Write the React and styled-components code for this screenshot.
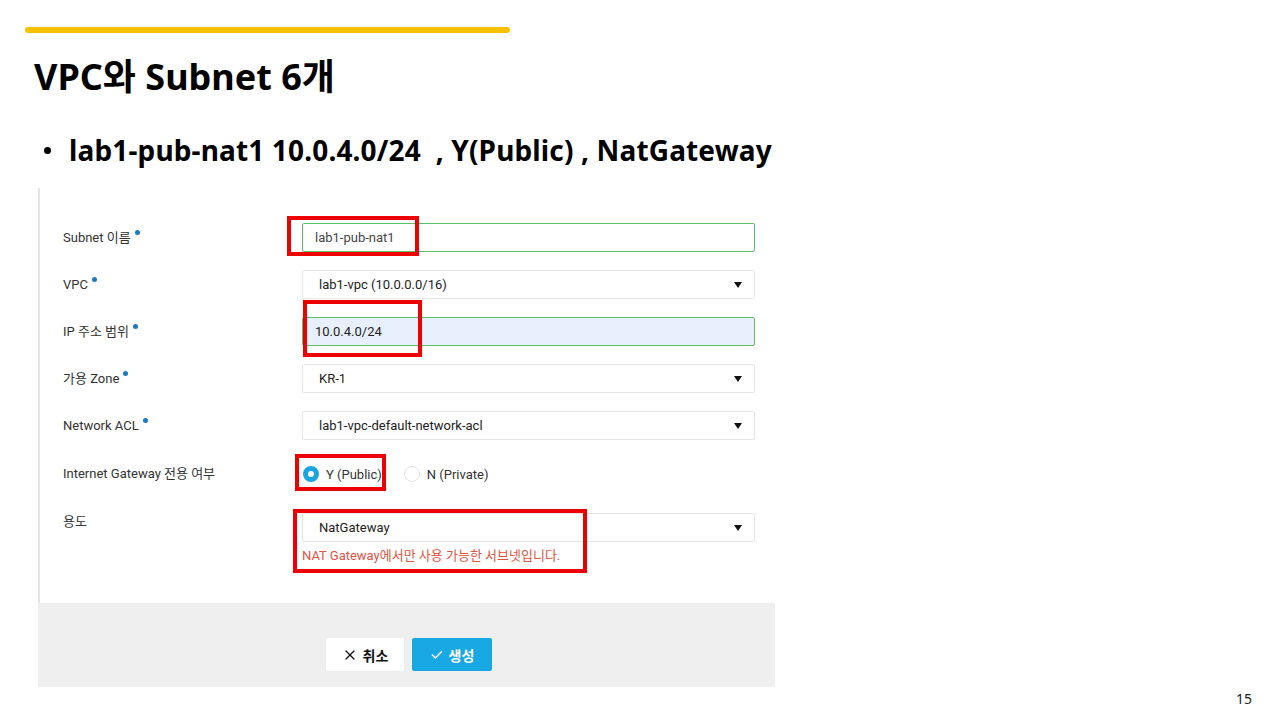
import React from 'react';
import styled, { createGlobalStyle } from 'styled-components';
import { X, Check } from 'lucide-react';

const GlobalStyle = createGlobalStyle`
  html, body {
    margin: 0;
    padding: 0;
    background: #ffffff;
  }
  * {
    box-sizing: border-box;
  }
`;

const Slide = styled.div`
  position: relative;
  width: 1280px;
  height: 720px;
  overflow: hidden;
  background: #ffffff;
  display: flex;
  flex-direction: column;
  font-family: "Noto Sans", "Noto Sans CJK KR", sans-serif;
`;

const TopRule = styled.div`
  margin: 27px 0 0 25px;
  width: 485px;
  height: 6px;
  border-radius: 3px;
  background: #f6c200;
`;

const Title = styled.h1`
  margin: 22px 0 0 34px;
  font-family: "Noto Sans", "Noto Sans CJK KR", sans-serif;
  font-size: 36px;
  font-weight: 700;
  line-height: 44px;
  color: #000000;
`;

const Bullet = styled.div`
  margin: 33px 0 0 44px;
  display: flex;
  align-items: center;
  gap: 18px;
  font-size: 28px;
  font-weight: 700;
  line-height: 36px;
  letter-spacing: 0.15px;
  color: #000000;
  white-space: pre;

  &::before {
    content: '';
    width: 7px;
    height: 7px;
    border-radius: 50%;
    background: #000000;
  }
`;

const Panel = styled.div`
  margin: 20px 0 0 38px;
  width: 737px;
  display: flex;
  flex-direction: column;
  font-family: Roboto, "Noto Sans CJK KR", sans-serif;
  font-size: 13px;
  color: #333333;
`;

const FormArea = styled.div`
  height: 415px;
  border-left: 2px solid #e4e4e4;
  padding: 35px 20px 0 23px;
  display: flex;
  flex-direction: column;
  gap: 18px;
`;

const Row = styled.div`
  display: grid;
  grid-template-columns: 239px 453px;
  align-items: start;
  margin-bottom: ${(p) => (p.$extra ? `${p.$extra}px` : '0')};
`;

const Label = styled.div`
  line-height: ${(p) => p.$lh || 29}px;
  white-space: nowrap;
`;

const Required = styled.span`
  display: inline-block;
  width: 5px;
  height: 5px;
  margin-left: 4px;
  border-radius: 50%;
  background: #1a78c8;
  vertical-align: 7px;
`;

const Field = styled.div`
  position: relative;
`;

const TextInput = styled.div`
  height: 29px;
  border: 1px solid #5cbd6a;
  border-radius: 2px;
  background: ${(p) => (p.$filled ? '#e8f0fd' : '#ffffff')};
  padding-left: 12px;
  line-height: 27px;
  color: ${(p) => (p.$filled ? '#222222' : '#444444')};
`;

const Select = styled.div`
  height: 29px;
  border: 1px solid #e6e6e6;
  border-radius: 2px;
  background: #ffffff;
  padding: 0 12px 0 16px;
  display: flex;
  align-items: center;
  justify-content: space-between;
  color: #222222;
`;

const Caret = styled.span`
  width: 0;
  height: 0;
  border-left: 4.5px solid transparent;
  border-right: 4.5px solid transparent;
  border-top: 6px solid #111111;
`;

const RadioGroup = styled.div`
  height: 32px;
  display: flex;
  align-items: center;
  padding-left: 1px;
  gap: 22px;
`;

const RadioOption = styled.label`
  display: flex;
  align-items: center;
  gap: 7px;
  color: #333333;
`;

const RadioDot = styled.span`
  width: 16px;
  height: 16px;
  border-radius: 50%;
  border: ${(p) => (p.$on ? '5px solid #1ba5e0' : '1px solid #e2e2e2')};
  background: #ffffff;
`;

const Hint = styled.div`
  margin-top: 5px;
  color: #e0533f;
  font-size: 13px;
  line-height: 17px;
`;

const Highlight = styled.div`
  position: absolute;
  left: ${(p) => p.$x}px;
  top: ${(p) => p.$y}px;
  width: ${(p) => p.$w}px;
  height: ${(p) => p.$h}px;
  border: 4px solid #ee0000;
  pointer-events: none;
`;

const Footer = styled.div`
  height: 84px;
  background: #efefef;
  display: flex;
  justify-content: center;
  align-items: flex-start;
  padding: 35px 0 0 5px;
  gap: 8px;
`;

const Button = styled.button`
  height: 33px;
  width: ${(p) => (p.$primary ? '80px' : '78px')};
  border: none;
  border-radius: 2px;
  background: ${(p) => (p.$primary ? '#18a9e4' : '#ffffff')};
  color: ${(p) => (p.$primary ? '#ffffff' : '#111111')};
  font-family: "Noto Sans CJK KR", sans-serif;
  font-size: 14px;
  font-weight: 700;
  display: flex;
  align-items: center;
  justify-content: center;
  gap: 5px;
  padding: 0;
`;

const PageNumber = styled.div`
  position: absolute;
  right: 28px;
  bottom: 12px;
  font-family: "Noto Sans", sans-serif;
  font-size: 14px;
  color: #222222;
`;

export default function App() {
  return (
    <Slide>
      <GlobalStyle />
      <TopRule />
      <Title>VPC와 Subnet 6개</Title>
      <Bullet>lab1-pub-nat1 10.0.4.0/24  , Y(Public) , NatGateway</Bullet>

      <Panel>
        <FormArea>
          <Row>
            <Label>Subnet 이름<Required /></Label>
            <Field>
              <TextInput>lab1-pub-nat1</TextInput>
              <Highlight $x={-15} $y={-7} $w={132} $h={40} />
            </Field>
          </Row>

          <Row>
            <Label>VPC<Required /></Label>
            <Select>lab1-vpc (10.0.0.0/16)<Caret /></Select>
          </Row>

          <Row>
            <Label>IP 주소 범위<Required /></Label>
            <Field>
              <TextInput $filled>10.0.4.0/24</TextInput>
              <Highlight $x={1} $y={-17} $w={119} $h={57} />
            </Field>
          </Row>

          <Row>
            <Label>가용 Zone<Required /></Label>
            <Select>KR-1<Caret /></Select>
          </Row>

          <Row>
            <Label>Network ACL<Required /></Label>
            <Select>lab1-vpc-default-network-acl<Caret /></Select>
          </Row>

          <Row $extra={5}>
            <Label $lh={32}>Internet Gateway 전용 여부</Label>
            <Field>
              <RadioGroup>
                <RadioOption><RadioDot $on />Y (Public)</RadioOption>
                <RadioOption><RadioDot />N (Private)</RadioOption>
              </RadioGroup>
              <Highlight $x={-7} $y={-4} $w={91} $h={37} />
            </Field>
          </Row>

          <Row>
            <Label $lh={17}>용도</Label>
            <Field>
              <Select>NatGateway<Caret /></Select>
              <Hint>NAT Gateway에서만 사용 가능한 서브넷입니다.</Hint>
              <Highlight $x={-9} $y={-4} $w={294} $h={64} />
            </Field>
          </Row>
        </FormArea>

        <Footer>
          <Button>
            <X size={16} strokeWidth={1.8} />
            취소
          </Button>
          <Button $primary>
            <Check size={14} strokeWidth={2.4} />
            생성
          </Button>
        </Footer>
      </Panel>

      <PageNumber>15</PageNumber>
    </Slide>
  );
}
